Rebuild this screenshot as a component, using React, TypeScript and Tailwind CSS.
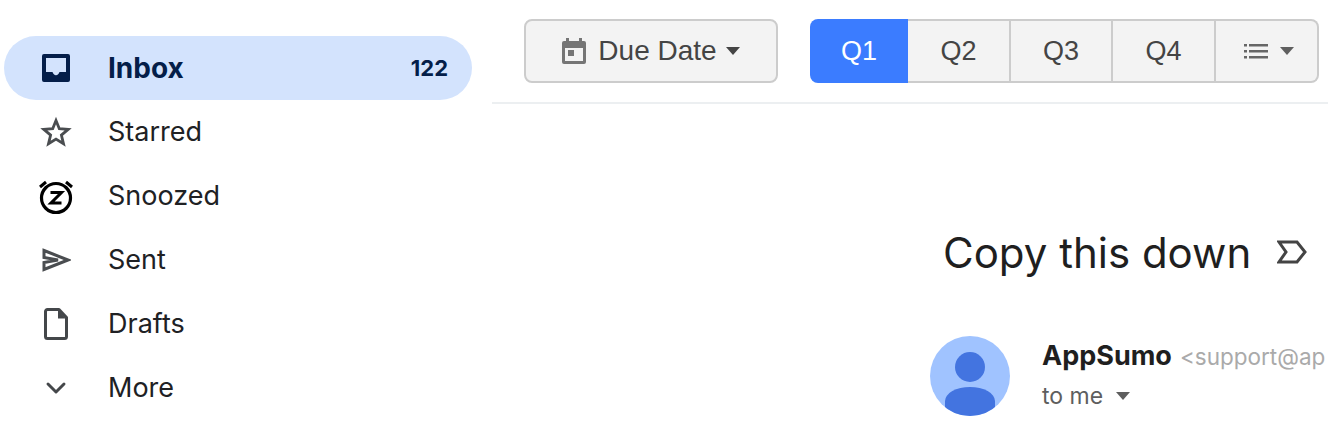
import { ChevronDown } from "lucide-react";

const navItems = [
  { label: "Starred", icon: <StarIcon /> },
  { label: "Snoozed", icon: <SnoozeIcon /> },
  { label: "Sent", icon: <SentIcon /> },
  { label: "Drafts", icon: <DraftIcon /> },
  { label: "More", icon: <ChevronDown size={32} strokeWidth={2.2} className="text-[#44474a]" /> },
];

function InboxIcon() {
  return (
    <svg width="30" height="30" viewBox="0 0 30 30">
      <path
        fillRule="evenodd"
        fill="#041e49"
        d="M3 1h24a2 2 0 0 1 2 2v24a2 2 0 0 1-2 2H3a2 2 0 0 1-2-2V3a2 2 0 0 1 2-2zM5 5v14h6.500c.6 2 1.900 3.200 3.500 3.200s2.900-1.200 3.500-3.200H25V5z"
      />
    </svg>
  );
}

function StarIcon() {
  return (
    <svg width="32" height="32" viewBox="0 0 32 32" fill="none">
      <path
        d="M16 4.500l3.300 8.200 8.900.7-6.800 5.700 2.100 8.700L16 23.100l-7.500 4.700 2.100-8.700-6.800-5.700 8.900-.7z"
        stroke="#4a4d50"
        strokeWidth="2.800"
      />
    </svg>
  );
}

function SnoozeIcon() {
  return (
    <svg width="38" height="38" viewBox="0 0 38 38" fill="none" stroke="#000">
      <circle cx="19" cy="21" r="14.500" strokeWidth="3.200" />
      <path d="M3 10l6-5M35 10l-6-5" strokeWidth="3" />
      <path d="M13.500 15.500h11L14 26h10.500" strokeWidth="3" />
    </svg>
  );
}

function SentIcon() {
  return (
    <svg width="30" height="24" viewBox="0 0 30 24" fill="none">
      <path d="M3 2.500L27 12 3 21.500V14.500L17 12 3 9.500z" stroke="#4a4d50" strokeWidth="3" />
    </svg>
  );
}

function DraftIcon() {
  return (
    <svg width="24" height="32" viewBox="0 0 24 32" fill="none">
      <path
        d="M3.500 1.500h11.500l7.500 8v19a2 2 0 0 1-2 2h-17a2 2 0 0 1-2-2v-25a2 2 0 0 1 2-2z"
        stroke="#44474a"
        strokeWidth="3"
        strokeLinejoin="round"
      />
      <path d="M14 2l8 8.500h-8z" fill="#44474a" />
    </svg>
  );
}

function CalendarIcon() {
  return (
    <svg width="24" height="26" viewBox="0 0 24 26">
      <path
        fillRule="evenodd"
        fill="#757575"
        d="M4 0h3v3h10V0h3v3h2a2 2 0 0 1 2 2v19a2 2 0 0 1-2 2H2a2 2 0 0 1-2-2V5a2 2 0 0 1 2-2h2zM3 10v13h18V10z"
      />
      <rect x="6" y="12" width="6" height="6" fill="#757575" />
    </svg>
  );
}

function Caret({ className }: { className: string }) {
  return <span className={`inline-block border-x-[7.5px] border-t-[8px] border-x-transparent ${className}`} />;
}

function ListIcon() {
  return (
    <svg width="24" height="15" viewBox="0 0 24 15" fill="#666">
      <rect x="0" y="0" width="3" height="2.500" />
      <rect x="0" y="6" width="3" height="2.500" />
      <rect x="0" y="12" width="3" height="2.500" />
      <rect x="5" y="0" width="19" height="2.500" />
      <rect x="5" y="6" width="19" height="2.500" />
      <rect x="5" y="12" width="19" height="2.500" />
    </svg>
  );
}

function LabelIcon() {
  return (
    <svg width="30" height="24" viewBox="0 0 30 24" fill="none">
      <path d="M2 2h18l8 10-8 10H2l7-10z" stroke="#444" strokeWidth="3" />
    </svg>
  );
}

function Avatar() {
  return (
    <div className="w-20 h-20 shrink-0 rounded-full overflow-hidden bg-[#a0c3ff] flex flex-col items-center">
      <div className="w-[30px] h-[30px] shrink-0 mt-4 rounded-full bg-[#4374e0]" />
      <div className="w-[50px] h-[40px] shrink-0 mt-[5px] rounded-t-[25px_14px] bg-[#4374e0]" />
    </div>
  );
}

export default function App() {
  return (
    <div className="flex w-[1328px] h-[426px] overflow-hidden bg-white">
      {/* SIDEBAR */}
      <div className="w-[492px] shrink-0 pt-9 pl-1 pr-5 font-['Inter',sans-serif]">
        <div className="flex items-center h-16 rounded-full bg-[#d3e3fd] text-[#041e49] font-bold text-[28px]">
          <div className="w-[104px] pl-[37px] flex items-center">
            <InboxIcon />
          </div>
          <span className="flex-1">Inbox</span>
          <span className="pr-6 text-[22px]">122</span>
        </div>
        {navItems.map((item) => (
          <div key={item.label} className="flex items-center h-16 text-[27px] text-[#202124]">
            <div className="w-[104px] pr-[1px] flex justify-center">{item.icon}</div>
            <span>{item.label}</span>
          </div>
        ))}
      </div>

      {/* MAIN */}
      <div className="flex-1 min-w-0">
        <div className="flex h-[104px] items-start pt-[19px] pl-8 border-b-2 border-[#eceff1] font-['Liberation_Sans',sans-serif] text-[27px] text-[#444]">
          <button className="flex items-center justify-center w-[254px] h-16 rounded-lg border-2 border-[#cccccc] bg-[#f3f3f3] text-[28px]">
            <CalendarIcon />
            <span className="ml-3 mr-[9px]">Due Date</span>
            <Caret className="border-t-[#444]" />
          </button>
          <div className="flex ml-8 h-16 w-[509px]">
            <button className="w-[98px] rounded-l-lg bg-[#3b7cff] text-white">Q1</button>
            <button className="w-[103px] border-y-2 border-r-2 border-[#cccccc] bg-[#f3f3f3]">Q2</button>
            <button className="w-[102px] border-y-2 border-r-2 border-[#cccccc] bg-[#f3f3f3]">Q3</button>
            <button className="w-[103px] border-y-2 border-r-2 border-[#cccccc] bg-[#f3f3f3]">Q4</button>
            <button className="flex flex-1 items-center justify-center gap-3 pl-1 rounded-r-lg border-y-2 border-r-2 border-[#cccccc] bg-[#f3f3f3]">
              <ListIcon />
              <Caret className="border-t-[#5f5f5f]" />
            </button>
          </div>
        </div>

        <div className="pl-[438px] pt-[120px]">
          <div className="flex items-center ml-[13px] h-[56px] font-['Inter',sans-serif] text-[42px] text-[#1f1f1f]">
            <span className="whitespace-nowrap">Copy this down</span>
            <span className="ml-[26px] shrink-0">
              <LabelIcon />
            </span>
          </div>
          <div className="flex mt-14 w-[398px] font-['Inter',sans-serif]">
            <Avatar />
            <div className="ml-8 pt-[2px] min-w-0">
              <div className="flex items-baseline whitespace-nowrap leading-9">
                <span className="font-bold text-[27px] text-[#1f1f1f]">AppSumo</span>
                <span className="ml-2 text-[22.5px] text-[#aaaaaa]">&lt;support@ap</span>
              </div>
              <div className="flex items-center gap-[13px] mt-1 text-[23px] text-[#5e5e5e]">
                <span>to me</span>
                <Caret className="border-t-[#5e5e5e]" />
              </div>
            </div>
          </div>
        </div>
      </div>
    </div>
  );
}
